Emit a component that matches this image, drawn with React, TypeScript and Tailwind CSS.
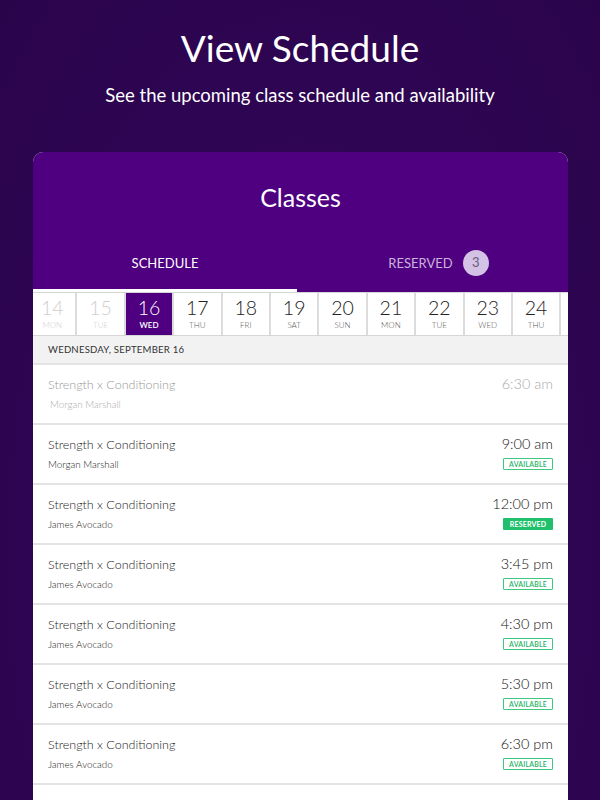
const days = [
  { n: 14, d: 'MON', past: true },
  { n: 15, d: 'TUE', past: true },
  { n: 16, d: 'WED', active: true },
  { n: 17, d: 'THU' },
  { n: 18, d: 'FRI' },
  { n: 19, d: 'SAT' },
  { n: 20, d: 'SUN' },
  { n: 21, d: 'MON' },
  { n: 22, d: 'TUE' },
  { n: 23, d: 'WED' },
  { n: 24, d: 'THU' },
]

type Status = 'past' | 'available' | 'reserved'

const classes: { time: string; coach: string; status: Status }[] = [
  { time: '6:30 am', coach: 'Morgan Marshall', status: 'past' },
  { time: '9:00 am', coach: 'Morgan Marshall', status: 'available' },
  { time: '12:00 pm', coach: 'James Avocado', status: 'reserved' },
  { time: '3:45 pm', coach: 'James Avocado', status: 'available' },
  { time: '4:30 pm', coach: 'James Avocado', status: 'available' },
  { time: '5:30 pm', coach: 'James Avocado', status: 'available' },
  { time: '6:30 pm', coach: 'James Avocado', status: 'available' },
]

function Badge({ status }: { status: Status }) {
  if (status === 'reserved') {
    return (
      <span className="w-[50px] h-[12px] flex items-center justify-center bg-[#1fbf6b] text-white text-[7px] font-bold tracking-wide rounded-[1px]">
        RESERVED
      </span>
    )
  }
  if (status === 'available') {
    return (
      <span className="w-[50px] h-[12px] flex items-center justify-center border border-[#3cc87f] text-[#27b368] text-[7px] font-semibold tracking-wide rounded-[1px]">
        AVAILABLE
      </span>
    )
  }
  return null
}

export default function App() {
  return (
    <div
      className="h-[800px] overflow-hidden bg-[radial-gradient(ellipse_at_50%_70%,#3a0764_0%,#2e0553_55%,#2a044b_100%)] text-white"
      style={{ fontFamily: 'Lato, "Open Sans", sans-serif' }}
    >
      <div className="pt-[26px] text-center">
        <h1 className="text-[37px] leading-[44px] font-normal">View Schedule</h1>
        <p className="mt-[13px] text-[18.5px] leading-[24px]">See the upcoming class schedule and availability</p>
      </div>

      <div className="mt-[45px] w-[535px] ml-[33px] rounded-t-[10px] overflow-hidden bg-white">
        <div className="bg-[#4e0080]">
          <h2 className="pt-[29px] text-center text-[25px] leading-[32px]">Classes</h2>
          <div className="mt-[37px] flex">
            <div className="w-[264px] h-[42px] flex items-start justify-center pt-[3px] border-b-[3px] border-white">
              <span className="text-[13px] leading-[20px]">SCHEDULE</span>
            </div>
            <div className="flex-1 h-[42px] flex items-start justify-center gap-[10px] pl-[12px]">
              <span className="text-[13px] leading-[20px] mt-[3px] text-[#c9b3dc]">RESERVED</span>
              <span className="w-[26px] h-[26px] rounded-full bg-[#d4c1e6] text-[#6b5a7a] text-[13px] flex items-center justify-center">
                3
              </span>
            </div>
          </div>
        </div>

        <div className="flex h-[44px] border-t border-[#4e0080] border-b border-[#d6d6d6] overflow-hidden">
          <div className="flex shrink-0 -ml-[4px]">
            {days.map((day) => (
              <div
                key={day.n}
                className={
                  'w-[48.4px] shrink-0 flex flex-col items-center border-r-2 border-[#dcdcdc] ' +
                  (day.active ? 'bg-[#4e0080] text-white' : day.past ? 'text-[#cfcfcf]' : 'text-[#222]')
                }
              >
                <span className="text-[19.5px] leading-[22px] mt-[4px] font-light">{day.n}</span>
                <span
                  className={
                    'text-[8px] leading-[10px] mt-[1px] ' +
                    (day.active ? 'text-white font-semibold' : day.past ? 'text-[#cfcfcf] font-light' : 'text-[#555] font-light')
                  }
                >
                  {day.d}
                </span>
              </div>
            ))}
            <div className="w-[48.4px] shrink-0 border-r-2 border-[#dcdcdc]" />
          </div>
        </div>

        <div className="h-[29px] bg-[#f2f2f2] border-b-2 border-[#e3e3e3] flex items-center pl-[15px] pt-[2px]">
          <span className="text-[9.6px] text-[#333] tracking-[0.2px]">WEDNESDAY, SEPTEMBER 16</span>
        </div>

        {classes.map((c, i) => (
          <div key={i} className="h-[60px] border-b-2 border-[#e3e3e3] flex justify-between pl-[15px] pr-[15px]">
            <div className="flex flex-col pt-[11px]">
              <span className={'text-[12.5px] leading-[18px] font-light ' + (c.status === 'past' ? 'text-[#999]' : 'text-[#222]')}>
                Strength x Conditioning
              </span>
              <span
                className={
                  'text-[9.8px] leading-[14px] mt-[3px] font-light ' + (c.status === 'past' ? 'text-[#aaa] pl-[2px]' : 'text-[#222]')
                }
              >
                {c.coach}
              </span>
            </div>
            <div className="flex flex-col items-end pt-[9px]">
              <span className={'text-[14.5px] leading-[20px] font-light ' + (c.status === 'past' ? 'text-[#aaa]' : 'text-[#111]')}>
                {c.time}
              </span>
              <div className="mt-[4px]">
                <Badge status={c.status} />
              </div>
            </div>
          </div>
        ))}
        <div className="h-[60px]" />
      </div>
    </div>
  )
}
